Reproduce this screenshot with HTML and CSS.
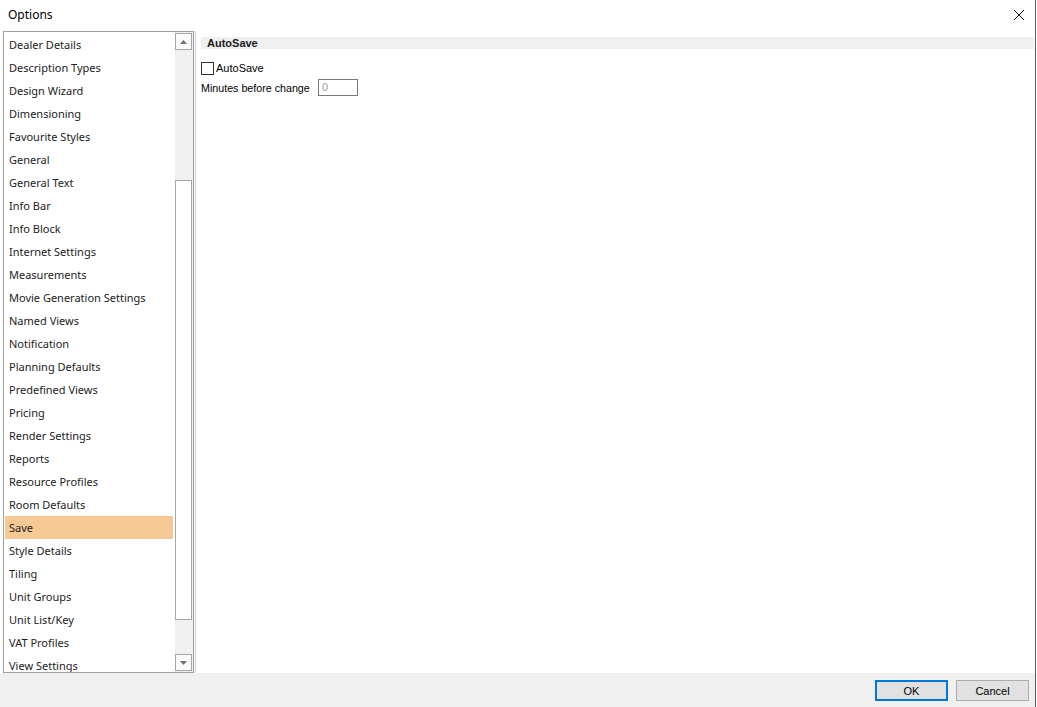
FILE: index.html
```html
<!DOCTYPE html>
<html>
<head>
<meta charset="utf-8">
<link rel="stylesheet" href="styles.css">
</head>
<body>
<div class="window">
  <div class="titlebar">
    <span class="title">Options</span>
    <svg class="close" width="12" height="12" viewBox="0 0 12 12"><path d="M1 1 L11 11 M11 1 L1 11" stroke="#111" stroke-width="1" fill="none"/></svg>
  </div>
  <div class="main">
    <div class="listbox">
      <div class="items">
        <div class="item">Dealer Details</div>
        <div class="item">Description Types</div>
        <div class="item">Design Wizard</div>
        <div class="item">Dimensioning</div>
        <div class="item">Favourite Styles</div>
        <div class="item">General</div>
        <div class="item">General Text</div>
        <div class="item">Info Bar</div>
        <div class="item">Info Block</div>
        <div class="item">Internet Settings</div>
        <div class="item">Measurements</div>
        <div class="item">Movie Generation Settings</div>
        <div class="item">Named Views</div>
        <div class="item">Notification</div>
        <div class="item">Planning Defaults</div>
        <div class="item">Predefined Views</div>
        <div class="item">Pricing</div>
        <div class="item">Render Settings</div>
        <div class="item">Reports</div>
        <div class="item">Resource Profiles</div>
        <div class="item">Room Defaults</div>
        <div class="item selected">Save</div>
        <div class="item">Style Details</div>
        <div class="item">Tiling</div>
        <div class="item">Unit Groups</div>
        <div class="item">Unit List/Key</div>
        <div class="item">VAT Profiles</div>
        <div class="item">View Settings</div>
      </div>
      <div class="scrollbar">
        <div class="sbtn"><svg width="7" height="4" viewBox="0 0 7 4"><path d="M0 4 L3.5 0 L7 4 Z" fill="#707070"/></svg></div>
        <div class="track-top"></div>
        <div class="thumb"></div>
        <div class="track-bottom"></div>
        <div class="sbtn"><svg width="7" height="4" viewBox="0 0 7 4"><path d="M0 0 L3.5 4 L7 0 Z" fill="#707070"/></svg></div>
      </div>
    </div>
    <div class="panel">
      <div class="section">AutoSave</div>
      <label class="check-row"><span class="checkbox"></span><span class="check-label">AutoSave</span></label>
      <div class="field-row">
        <span class="field-label">Minutes before change</span>
        <span class="input">0</span>
      </div>
    </div>
  </div>
  <div class="footer">
    <button class="btn btn-default">OK</button>
    <button class="btn">Cancel</button>
  </div>
</div>
</body>
</html>
```
FILE: styles.css
```css
* { box-sizing: border-box; }
html, body { margin: 0; padding: 0; background: #fff; }
body { width: 1037px; height: 707px; overflow: hidden; }

.window {
  width: 1036px;
  height: 707px;
  border-right: 1px solid #5a5a5a;
  display: flex;
  flex-direction: column;
  background: #fff;
}

.titlebar {
  height: 31px;
  display: flex;
  align-items: center;
  justify-content: space-between;
  padding: 0 10px 2px 8px;
}
.title {
  font-family: "Noto Sans", "Open Sans", sans-serif;
  font-size: 12px;
  color: #000;
}
.close { display: block; }

.main {
  height: 642px;
  display: flex;
  padding-left: 3px;
}

.listbox {
  width: 191px;
  height: 642px;
  border: 1px solid #a0a0a0;
  display: flex;
  background: #fff;
}
.items {
  width: 171px;
  padding: 1px 0 0 1px;
  overflow: hidden;
}
.item {
  width: 168px;
  height: 23px;
  line-height: 23px;
  padding-left: 4px;
  font-family: "Noto Sans", "Open Sans", sans-serif;
  font-size: 11px;
  color: #222;
  white-space: nowrap;
}
.item.selected { background: #f5c994; }

.scrollbar {
  width: 18px;
  padding: 1px 1px 1px 0;
  display: flex;
  flex-direction: column;
  background: #f0f0f0;
}
.sbtn {
  height: 17px;
  border: 1px solid #a6a6a6;
  background: #fbfbfb;
  display: flex;
  align-items: center;
  justify-content: center;
}
.track-top { height: 130px; }
.thumb {
  height: 440px;
  border: 1px solid #a6a6a6;
  background: #fff;
}
.track-bottom { flex: 1; }

.panel {
  flex: 1;
  margin-left: 1px;
  border-left: 1px solid #d2d2d2;
  padding: 6px 1px 0 5px;
  font-family: "Liberation Sans", Arial, sans-serif;
  font-size: 11px;
  color: #000;
}
.section {
  height: 12px;
  line-height: 12px;
  background: #f0f0f0;
  font-weight: bold;
  padding-left: 6px;
  color: #1a1a1a;
}
.check-row {
  display: flex;
  align-items: center;
  margin-top: 12px;
  height: 14px;
}
.checkbox {
  width: 13px;
  height: 13px;
  border: 1px solid #333;
  background: #fff;
  margin-right: 2px;
}
.field-row {
  display: flex;
  align-items: center;
  margin-top: 4px;
  height: 17px;
}
.field-label { width: 117px; font-size: 10.7px; }
.input {
  width: 40px;
  height: 17px;
  border: 1px solid #7a7a7a;
  padding-left: 3px;
  line-height: 15px;
  color: #a0a0a0;
}

.footer {
  flex: 1;
  background: #f0f0f0;
  display: flex;
  justify-content: flex-end;
  align-items: flex-start;
  gap: 8px;
  padding: 7px 6px 0 0;
}
.btn {
  width: 73px;
  height: 21px;
  background: #e1e1e1;
  border: 1px solid #adadad;
  font-family: "Liberation Sans", Arial, sans-serif;
  font-size: 11px;
  color: #000;
  padding: 0;
  margin: 0;
}
.btn-default {
  border: 2px solid #0078d7;
}
```
